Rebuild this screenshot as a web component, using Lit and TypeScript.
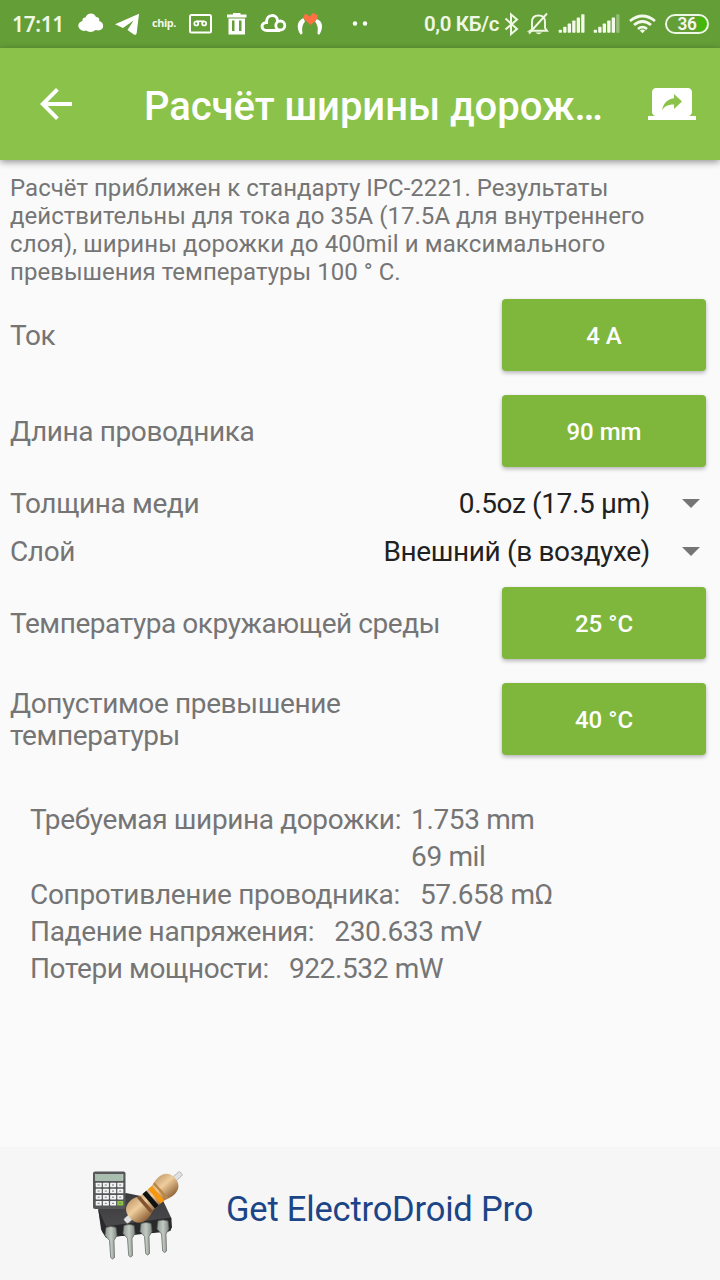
import { LitElement, html, css, svg } from "lit";
import { customElement } from "lit/decorators.js";

const keys = [0, 1, 2, 3].flatMap((r) => [0, 1, 2, 3].map((c) => ({ r, c })));
const pins = [
  { x: 106, y: 1226 },
  { x: 124, y: 1224 },
  { x: 141, y: 1222 },
  { x: 158, y: 1219.5 },
];

@customElement("status-bar")
export class StatusBar extends LitElement {
  static styles = css`
    :host { display: flex; height: 48px; background: #649e37; color: #f3faec; justify-content: space-between; }
    svg { display: block; flex: none; }
  `;
  render() {
    return html`
      <svg width="400" height="48" viewBox="0 0 400 48" fill="#fff">
        <text x="12" y="32" textLength="52" lengthAdjust="spacingAndGlyphs" font-family="Noto Sans, sans-serif" font-weight="600" font-size="21" fill="#eff8e5">17:11</text>
        <path d="M82 30.500C77 28 77 22.500 82.500 21C82 18.500 84 17.500 85.500 17.500C87 12.500 94 12 96 17C98.500 17 99.500 18.500 99.300 21C104 22.500 104.500 28.500 100.300 30C97.500 31 96.500 30 95.500 30C93 32.500 88.500 32.500 86 30.500C84.500 31 83.500 31 82 30.500Z"/>
        <path d="M115 24.300L139 13.800L136.700 33C136.300 35 135 35.300 133.500 34.300L127.500 30L133.500 20.500L123 28Z"/>
        <text x="152" y="26.500" textLength="24" lengthAdjust="spacingAndGlyphs" font-family="Open Sans, sans-serif" font-weight="700" font-size="11" fill="#f0f8e8">chip.</text>
        <rect x="190" y="15" width="21" height="17.500" rx="1.500" fill="none" stroke="#fff" stroke-width="2"/>
        <g fill="none" stroke="#fff" stroke-width="1.700"><circle cx="196.300" cy="23.500" r="2"/><circle cx="204.200" cy="23.500" r="2"/><path d="M196 21.300H204.500"/></g>
        <path d="M227 14.500H233V13H240.500V14.500H246.500V17.500H227ZM228.500 18.500H245V34.500H228.500ZM232 20.500V31H234.500V20.500ZM239 20.500V31H241.500V20.500Z" fill-rule="evenodd"/>
        <g fill="none" stroke="#fff" stroke-width="3"><path d="M280 30.500H267C260.500 30.500 260.500 22.500 266.500 22.500C266 14 276.500 13.500 277.500 20L278 22"/><circle cx="280.300" cy="25.500" r="4.500" stroke-width="2.800"/></g>
        <path d="M303.500 18C297 20.500 296 28 300.500 34.500C301.500 34.500 302 34 302.500 33C301.500 27 303 24 305 21.500ZM316.500 19C323 21 323.500 28 319.500 34.500C318 34.500 317.500 34 317.500 33C318.500 27 317 24.500 315 21.500Z"/>
        <path d="M310.500 25L303 18L305 13.500L310 16.500L313 12.700L318 15.500L316 20.500Z" fill="#ff7043"/>
        <circle cx="355" cy="23.500" r="2.200"/><circle cx="365" cy="23.500" r="2.200"/>
      </svg>
      <svg width="300" height="48" viewBox="420 0 300 48" fill="#f3faec">
        <text x="424" y="31" textLength="75" lengthAdjust="spacingAndGlyphs" font-family="Roboto, sans-serif" font-weight="600" font-size="20.500" fill="#eff8e5">0,0 КБ/с</text>
        <path d="M505.500 18.500L517 29L511 34V14.500L517 19.500L505.500 29.500" fill="none" stroke="#eff8e5" stroke-width="2"/>
        <g fill="none" stroke="#eff8e5" stroke-width="1.900"><path d="M532 29.500V22C532 17.500 534.500 15.500 538.500 15.500C543 15.500 545 18 545 22V28L547 30.800H530Z"/><path d="M529 33.500L547 13.500"/></g>
        <path d="M535.500 32.500H542Q538.800 36 535.500 32.500Z"/>
        ${[0, 1, 2, 3, 4, 5].map((i) => svg`
          <rect x=${558.7 + i * 4.5} y=${29.8 - i * 3.1} width="3.300" height=${3 + i * 3.1} rx=".7"/>
          <rect x=${593.7 + i * 4.5} y=${29.8 - i * 3.1} width="3.300" height=${3 + i * 3.1} rx=".7" fill-opacity=${i === 5 ? 0.35 : 1}/>`)}
        <g fill="none" stroke="#f3faec" stroke-width="2.700"><path d="M630 21Q642.500 11 655 21"/><path d="M634 25Q642.500 18 651 25"/><path d="M638 29Q642.500 25.300 647 29"/></g>
        <path d="M639.800 30.500Q642.500 28.500 645.200 30.500L642.500 33.300Z"/>
        <path d="M697 17H701A7 7 0 0 1 701 31H697Z" fill="#45b60b"/>
        <rect x="666" y="15" width="42" height="18" rx="9" fill="none" stroke="#eff8e5" stroke-width="2"/>
        <text x="677.500" y="30.300" textLength="19" lengthAdjust="spacingAndGlyphs" font-family="Roboto, sans-serif" font-weight="600" font-size="18">36</text>
      </svg>`;
  }
}

@customElement("app-bar")
export class AppBar extends LitElement {
  static styles = css`
    :host { display: flex; height: 112px; align-items: center; background: #8bc34a; color: #fff; padding: 0 24px 0 40px; box-sizing: border-box; box-shadow: 0 2px 7px rgba(0,0,0,.42); z-index: 1; }
    .title { flex: 1; margin: 5px 0 0 72px; font: 500 40px/48px Roboto, sans-serif; letter-spacing: -0.05px; white-space: nowrap; }
    svg { display: block; flex: none; }
  `;
  render() {
    return html`
      <svg width="32" height="32" viewBox="4 4 16 16" fill="#fff"><path d="M20 11H7.830l5.590-5.590L12 4l-8 8 8 8 1.410-1.410L7.830 13H20v-2z"/></svg>
      <div class="title">Расчёт ширины дорож…</div>
      <svg width="48" height="32" viewBox="0 4 24 16" fill="#fff"><path fill-rule="evenodd" d="M20 18c1.100 0 1.990-.9 1.990-2L22 6c0-1.110-.9-2-2-2H4c-1.110 0-2 .89-2 2v10c0 1.100.89 2 2 2H0v2h24v-2h-4zm-7-3.530v-2.190c-2.780 0-4.610.85-6 2.720.56-2.670 2.110-5.330 6-5.870V7l4 3.730-4 3.740z"/></svg>`;
  }
}

@customElement("promo-banner")
export class PromoBanner extends LitElement {
  static styles = css`
    :host { display: flex; height: 133px; background: #f6f6f6; align-items: center; box-sizing: border-box; padding-left: 88px; }
    svg { display: block; flex: none; }
    .label { margin: -9px 0 0 38px; font: 400 34.500px/44px Roboto, sans-serif; letter-spacing: -0.2px; color: #1c4587; white-space: nowrap; }
  `;
  render() {
    return html`
      <svg width="100" height="100" viewBox="88 1163.500 100 100">
        <defs>
          <linearGradient id="chip" x1="0" y1="0" x2="0" y2="1"><stop stop-color="#3b3b3d"/><stop offset=".7" stop-color="#49494b"/><stop offset="1" stop-color="#222"/></linearGradient>
          <linearGradient id="body" x1="0" y1="0" x2="0" y2="1"><stop stop-color="#c9a273"/><stop offset=".4" stop-color="#efcd9c"/><stop offset="1" stop-color="#8d6136"/></linearGradient>
          <linearGradient id="pin" x1="0" x2="1"><stop stop-color="#8f9891"/><stop offset=".5" stop-color="#c3cac4"/><stop offset="1" stop-color="#7d867f"/></linearGradient>
        </defs>
        <path d="M98 1207L126 1192.500L163 1200L171.500 1218L171 1230L106 1237L101 1229Z" fill="url(#chip)"/>
        <path d="M98 1208L106 1226L171 1217L172 1227L169 1231L106 1237L102 1231Z" fill="#29292b"/>
        ${pins.map((p) => svg`<path d="M${p.x} ${p.y + 1}Q${p.x + 5} ${p.y - 1} ${p.x + 10} ${p.y + 1}L${p.x + 11} ${p.y + 9}L${p.x + 8} ${p.y + 14}L${p.x + 8.5} ${p.y + 31}Q${p.x + 6.5} ${p.y + 34} ${p.x + 4.7} ${p.y + 31}L${p.x + 3.5} ${p.y + 14}L${p.x - 1} ${p.y + 9}Z" fill="url(#pin)" stroke="#59605b" stroke-width=".7"/>`)}
        <rect x="93" y="1171" width="32.500" height="37.500" rx="2" fill="#555759"/>
        <rect x="95.500" y="1174" width="27.500" height="6" fill="#a9bfae" stroke="#dce5de" stroke-width=".5"/>
        ${keys.map(({ r, c }) => svg`<rect x=${95.7 + c * 7.2} y=${1182.2 + r * 6.1} width="6" height="4.500" rx=".6" fill=${r === 3 && c === 3 ? "#8cc63f" : "#f3f3f3"}/><path d="M${97.6 + c * 7.2} ${1184.5 + r * 6.1}h2" stroke="#777" stroke-width="1"/>`)}
        <g transform="translate(152.500 1197.500) rotate(-41)">
          <rect x="-36" y="-3" width="13" height="6" rx="1.500" fill="#dfe2e1" stroke="#8a8a88" stroke-width=".5"/>
          <rect x="26" y="-2.500" width="12" height="5" rx="1.500" fill="#dfe2e1" stroke="#8a8a88" stroke-width=".5"/>
          <path d="M-30 0C-30-9-25-12.500-18-12.500C-13-12.500-10-10-7-9.500H7C10-10 13-11.800 18-11.800C25-11.800 30-8 30 0C30 8 25 11.800 18 11.800C13 11.800 10 10 7 9.500H-7C-10 10-13 12.500-18 12.500C-25 12.500-30 9-30 0Z" fill="url(#body)"/>
          <path d="M-11.500-10.800L-8-9.600V9.600L-11.500 10.800Z" fill="#805430"/>
          <path d="M-5-9.500H0V9.500H-5Z" fill="#111"/>
          <path d="M2.500-9.500H7.500V9.500H2.500Z" fill="#f8970d"/>
          <path d="M9.500-9.800L12-10.800V10.800L9.500 9.800Z" fill="#b98647"/>
        </g>
      </svg>
      <div class="label">Get ElectroDroid Pro</div>`;
  }
}

@customElement("app-root")
export class AppRoot extends LitElement {
  static styles = css`
    :host { display: flex; flex-direction: column; width: 720px; height: 1280px; background: #fafafa; color: #757575; font: 400 28px/32px Roboto, sans-serif; letter-spacing: -0.37px; overflow: hidden; }
    app-bar { position: relative; }
    main { flex: 1; }
    .intro { margin: 0; padding: 14px 10px 0; height: 127px; box-sizing: border-box; font-size: 24px; line-height: 28px; letter-spacing: 0.03px; white-space: nowrap; }
    .loose { letter-spacing: 0.12px; }
    .row { display: flex; align-items: center; justify-content: space-between; height: 96px; padding: 0 14px 0 10px; box-sizing: border-box; }
    .row > span { white-space: pre-line; padding-top: 2px; }
    .select { height: 48px; padding-right: 20px; }
    .value { display: flex; align-items: center; gap: 32px; color: #212121; padding-top: 2px; }
    .arrow { width: 0; height: 0; border: 9.500px solid transparent; border-top-color: #757575; border-bottom: 0; margin-top: -1px; }
    button { width: 204px; height: 72px; border: 0; border-radius: 4px; padding: 2px 0 0; background: #7eb73c; color: #fff; font: 500 24px/28px Roboto, sans-serif; box-shadow: 0 2px 4px rgba(0,0,0,.28); }
    .tight { letter-spacing: -0.43px; }
    .results { display: grid; padding: 34px 30px 0; grid-auto-rows: 37.300px; line-height: 37.300px; }
    .result { display: flex; white-space: nowrap; }
    .result b { font-weight: 400; margin-left: 20px; }
    .result .near { margin-left: 10px; }
    .wide { letter-spacing: -0.31px; }
  `;

  private field(label: string, value: string) {
    return html`<div class="row"><span class=${label.startsWith("Темп") ? "tight" : ""}>${label}</span><button>${value}</button></div>`;
  }
  private select(label: string, value: string) {
    return html`<div class="row select"><span>${label}</span><div class="value">${value}<i class="arrow"></i></div></div>`;
  }

  render() {
    return html`
      <status-bar></status-bar>
      <app-bar></app-bar>
      <main>
        <p class="intro">Расчёт приближен к стандарту IPC-2221. Результаты<br>действительны для тока до 35А (17.5А для внутреннего<br><span class="loose">слоя), ширины дорожки до 400mil и максимального</span><br>превышения температуры 100 ° С.</p>
        ${this.field("Ток", "4 A")}
        ${this.field("Длина проводника", "90 mm")}
        ${this.select("Толщина меди", "0.5oz (17.5 µm)")}
        ${this.select("Слой", "Внешний (в воздухе)")}
        ${this.field("Температура окружающей среды", "25 °C")}
        ${this.field("Допустимое превышение\nтемпературы", "40 °C")}
        <div class="results">
          <div class="result"><span>Требуемая ширина дорожки:</span><b class="near">1.753 mm<br>69 mil</b></div>
          <div></div>
          <div class="result"><span class="wide">Сопротивление проводника:</span><b>57.658 mΩ</b></div>
          <div class="result"><span class="wide">Падение напряжения:</span><b>230.633 mV</b></div>
          <div class="result"><span>Потери мощности:</span><b>922.532 mW</b></div>
        </div>
      </main>
      <promo-banner></promo-banner>`;
  }
}
